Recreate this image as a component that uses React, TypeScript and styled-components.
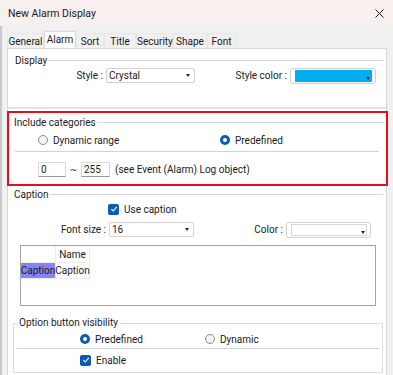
import React from 'react';
import styled, { createGlobalStyle } from 'styled-components';

const GlobalStyle = createGlobalStyle`
    body {
        margin : 0;
        font-family : Roboto, "Noto Sans", sans-serif;
    }
`;

const Window = styled.div`
    width : 393px;
    height : 375px;
    overflow : hidden;
    background-color : #f0f0f0;
    display : flex;
    flex-direction : column;
    color : #1b1b1b;
    font-size : 10px;
`;

const TitleBar = styled.div`
    height : 26px;
    flex-shrink : 0;
    background-color : #f8f0ee;
    display : flex;
    align-items : center;
    justify-content : space-between;
    padding : 1px 9px 0 8px;
    box-sizing : border-box;
    font-size : 10.5px;
`;

const Body = styled.div`
    flex : 1;
    display : flex;
    flex-direction : column;
    border-left : 2px solid #c9c9c9;
    padding : 5px 6px 0 5px;
    min-height : 0;
`;

const TabRow = styled.div`
    display : flex;
    align-items : flex-end;
    height : 17px;
    flex-shrink : 0;
`;

const Tab = styled.div<{ $active?: boolean; $width: number }>`
    width : ${p => p.$width}px;
    height : ${p => (p.$active ? 17 : 15)}px;
    line-height : ${p => (p.$active ? 16 : 15)}px;
    text-align : center;
    box-sizing : border-box;
    background-color : ${p => (p.$active ? '#ffffff' : '#f0f0f0')};
    border : 1px solid ${p => (p.$active ? '#dcdcdc' : '#e8e8e8')};
    border-bottom : none;
    white-space : nowrap;
`;

const Panel = styled.div`
    flex : 1;
    background-color : #ffffff;
    border : 1px solid #d9d9d9;
    border-bottom : none;
    display : flex;
    flex-direction : column;
`;

const GroupHeader = styled.div<{ $top: number; $left: number; $right: number }>`
    display : flex;
    align-items : center;
    height : 12px;
    margin-top : ${p => p.$top}px;
    padding-left : ${p => p.$left}px;
    margin-right : ${p => p.$right}px;
`;

const HeaderText = styled.span`
    white-space : nowrap;
    padding-right : 1px;
`;

const HeaderLine = styled.div`
    flex : 1;
    height : 1px;
    background-color : #d6d6d6;
`;

const FieldRow = styled.div<{ $top: number }>`
    display : flex;
    align-items : center;
    height : 15px;
    margin-top : ${p => p.$top}px;
`;

const FieldLabel = styled.span<{ $width: number }>`
    width : ${p => p.$width}px;
    text-align : right;
    margin-right : 3px;
    white-space : nowrap;
`;

const Combo = styled.div<{ $width: number }>`
    width : ${p => p.$width}px;
    height : 15px;
    box-sizing : border-box;
    border : 1px solid #d2d2d2;
    border-radius : 2px;
    display : flex;
    align-items : center;
    justify-content : space-between;
    padding : 0 4px 0 2px;
    background-color : #ffffff;
`;

const Arrow = styled.span`
    width : 0;
    height : 0;
    border-left : 2.5px solid transparent;
    border-right : 2.5px solid transparent;
    border-top : 3px solid #222222;
`;

const ColorBox = styled.div<{ $width: number }>`
    width : ${p => p.$width}px;
    height : 16px;
    box-sizing : border-box;
    border : 1px solid #d0d0d0;
    border-radius : 3px;
    padding : 1px 3px 1px 4px;
    display : flex;
    background-color : #ffffff;
`;

const ColorFill = styled.div<{ $color: string }>`
    flex : 1;
    background-color : ${p => p.$color};
    border : 1px solid ${p => (p.$color === '#ffffff' ? '#d6d6d6' : p.$color)};
    display : flex;
    align-items : flex-end;
    justify-content : flex-end;
    padding : 0 1px 1px 0;
`;

const Band = styled.div`
    height : 2px;
    margin-top : 24px;
    background-color : #e4e4e4;
`;

const Highlight = styled.div`
    margin : 2px -2px 0 -1px;
    border : 2px solid #e3101b;
    padding : 3px 0 7px 0;
    display : flex;
    flex-direction : column;
`;

const OptionRow = styled.div<{ $top: number; $left: number }>`
    display : flex;
    align-items : center;
    height : 12px;
    margin-top : ${p => p.$top}px;
    padding-left : ${p => p.$left}px;
`;

const Choice = styled.label<{ $width?: number }>`
    display : flex;
    align-items : center;
    gap : 5px;
    width : ${p => (p.$width ? `${p.$width}px` : 'auto')};
    white-space : nowrap;
`;

const Radio = styled.span<{ $on?: boolean }>`
    width : 10px;
    height : 10px;
    box-sizing : border-box;
    border-radius : 50%;
    flex-shrink : 0;
    background-color : ${p => (p.$on ? '#0b5cb5' : '#f4f4f4')};
    border : ${p => (p.$on ? 'none' : '1px solid #8c8c8c')};
    display : flex;
    align-items : center;
    justify-content : center;

    &::after {
        content : '';
        width : 4px;
        height : 4px;
        border-radius : 50%;
        background-color : #ffffff;
        display : ${p => (p.$on ? 'block' : 'none')};
    }
`;

const CheckBox = styled.span`
    width : 11px;
    height : 11px;
    border-radius : 2px;
    background-color : #0b5cb5;
    display : flex;
    align-items : center;
    justify-content : center;
    flex-shrink : 0;
`;

const Separator = styled.div<{ $top: number; $left: number; $right: number }>`
    height : 1px;
    background-color : #d3d3d3;
    margin : ${p => p.$top}px ${p => p.$right}px 0 ${p => p.$left}px;
`;

const RangeRow = styled.div`
    display : flex;
    align-items : center;
    height : 15px;
    margin-top : 10px;
    padding-left : 29px;
`;

const NumInput = styled.div<{ $width: number }>`
    width : ${p => p.$width}px;
    height : 15px;
    box-sizing : border-box;
    border : 1px solid #dadada;
    border-bottom-color : #9a9a9a;
    padding-left : 2px;
    line-height : 13px;
`;

const Tilde = styled.span`
    width : 15px;
    text-align : center;
`;

const Hint = styled.span`
    margin-left : 5px;
    white-space : nowrap;
`;

const ListBox = styled.div`
    height : 61px;
    box-sizing : border-box;
    margin : 8px 10px 0 12px;
    border : 1px solid #a3a3a3;
    padding : 0;
`;

const Grid = styled.div`
    display : grid;
    grid-template-columns : 35px 34px;
    grid-template-rows : 17px 16px;
`;

const Cell = styled.div<{ $selected?: boolean }>`
    display : flex;
    align-items : center;
    justify-content : center;
    border-right : 1px solid #ececec;
    border-bottom : 1px solid #ececec;
    background-color : ${p => (p.$selected ? '#8585f6' : '#ffffff')};
    white-space : nowrap;
`;

const FieldSet = styled.fieldset`
    margin : 11px 3px 0 5px;
    padding : 0 0 6px 0;
    border : 1px solid #dcdcdc;
    min-width : 0;
`;

const Legend = styled.legend`
    margin-left : 4px;
    padding : 0 1px;
    line-height : 12px;
`;

const CheckIcon = () => (
    <svg width="8" height="8" viewBox="0 0 8 8">
        <path d="M1.3 4.2 L3.2 6 L6.8 1.9" fill="none" stroke="#ffffff" strokeWidth="1.1" />
    </svg>
);

const CloseIcon = () => (
    <svg width="9" height="9" viewBox="0 0 9 9">
        <path d="M0.5 0.5 L8.5 8.5 M8.5 0.5 L0.5 8.5" stroke="#1c1c1c" strokeWidth="1" />
    </svg>
);

const tabs = [
    { name: 'General', width: 37 },
    { name: 'Alarm', width: 32 },
    { name: 'Sort', width: 28 },
    { name: 'Title', width: 32 },
    { name: 'Security', width: 37 },
    { name: 'Shape', width: 34 },
    { name: 'Font', width: 29 },
];

const App = () => {
    return (
        <Window>
            <GlobalStyle />
            <TitleBar>
                <span>New Alarm Display</span>
                <CloseIcon />
            </TitleBar>
            <Body>
                <TabRow>
                    {tabs.map(t => (
                        <Tab key={t.name} $width={t.width} $active={t.name === 'Alarm'}>{t.name}</Tab>
                    ))}
                </TabRow>
                <Panel>
                    <GroupHeader $top={5} $left={7} $right={2}>
                        <HeaderText>Display</HeaderText>
                        <HeaderLine />
                    </GroupHeader>
                    <FieldRow $top={2}>
                        <FieldLabel $width={95}>Style :</FieldLabel>
                        <Combo $width={89}>
                            <span>Crystal</span>
                            <Arrow />
                        </Combo>
                        <FieldLabel $width={92}>Style color :</FieldLabel>
                        <ColorBox $width={86}>
                            <ColorFill $color="#00aeef"><Arrow /></ColorFill>
                        </ColorBox>
                    </FieldRow>
                    <Band />

                    <Highlight>
                        <GroupHeader $top={0} $left={5} $right={2}>
                            <HeaderText>Include categories</HeaderText>
                            <HeaderLine />
                        </GroupHeader>
                        <OptionRow $top={6} $left={29}>
                            <Choice $width={182}><Radio />Dynamic range</Choice>
                            <Choice><Radio $on />Predefined</Choice>
                        </OptionRow>
                        <Separator $top={5} $left={6} $right={7} />
                        <RangeRow>
                            <NumInput $width={28}>0</NumInput>
                            <Tilde>~</Tilde>
                            <NumInput $width={29}>255</NumInput>
                            <Hint>(see Event (Alarm) Log object)</Hint>
                        </RangeRow>
                    </Highlight>

                    <GroupHeader $top={2} $left={6} $right={3}>
                        <HeaderText>Caption</HeaderText>
                        <HeaderLine />
                    </GroupHeader>
                    <OptionRow $top={3} $left={100}>
                        <Choice><CheckBox><CheckIcon /></CheckBox>Use caption</Choice>
                    </OptionRow>
                    <FieldRow $top={7}>
                        <FieldLabel $width={98}>Font size :</FieldLabel>
                        <Combo $width={85}>
                            <span>16</span>
                            <Arrow />
                        </Combo>
                        <FieldLabel $width={89}>Color :</FieldLabel>
                        <ColorBox $width={85}>
                            <ColorFill $color="#ffffff"><Arrow /></ColorFill>
                        </ColorBox>
                    </FieldRow>
                    <ListBox>
                        <Grid>
                            <Cell />
                            <Cell>Name</Cell>
                            <Cell $selected>Caption</Cell>
                            <Cell>Caption</Cell>
                        </Grid>
                    </ListBox>

                    <FieldSet>
                        <Legend>Option button visibility</Legend>
                        <OptionRow $top={4} $left={66}>
                            <Choice $width={125}><Radio $on />Predefined</Choice>
                            <Choice><Radio />Dynamic</Choice>
                        </OptionRow>
                        <Separator $top={3} $left={3} $right={3} />
                        <OptionRow $top={5} $left={66}>
                            <Choice><CheckBox><CheckIcon /></CheckBox>Enable</Choice>
                        </OptionRow>
                    </FieldSet>
                </Panel>
            </Body>
        </Window>
    );
};

export default App;
